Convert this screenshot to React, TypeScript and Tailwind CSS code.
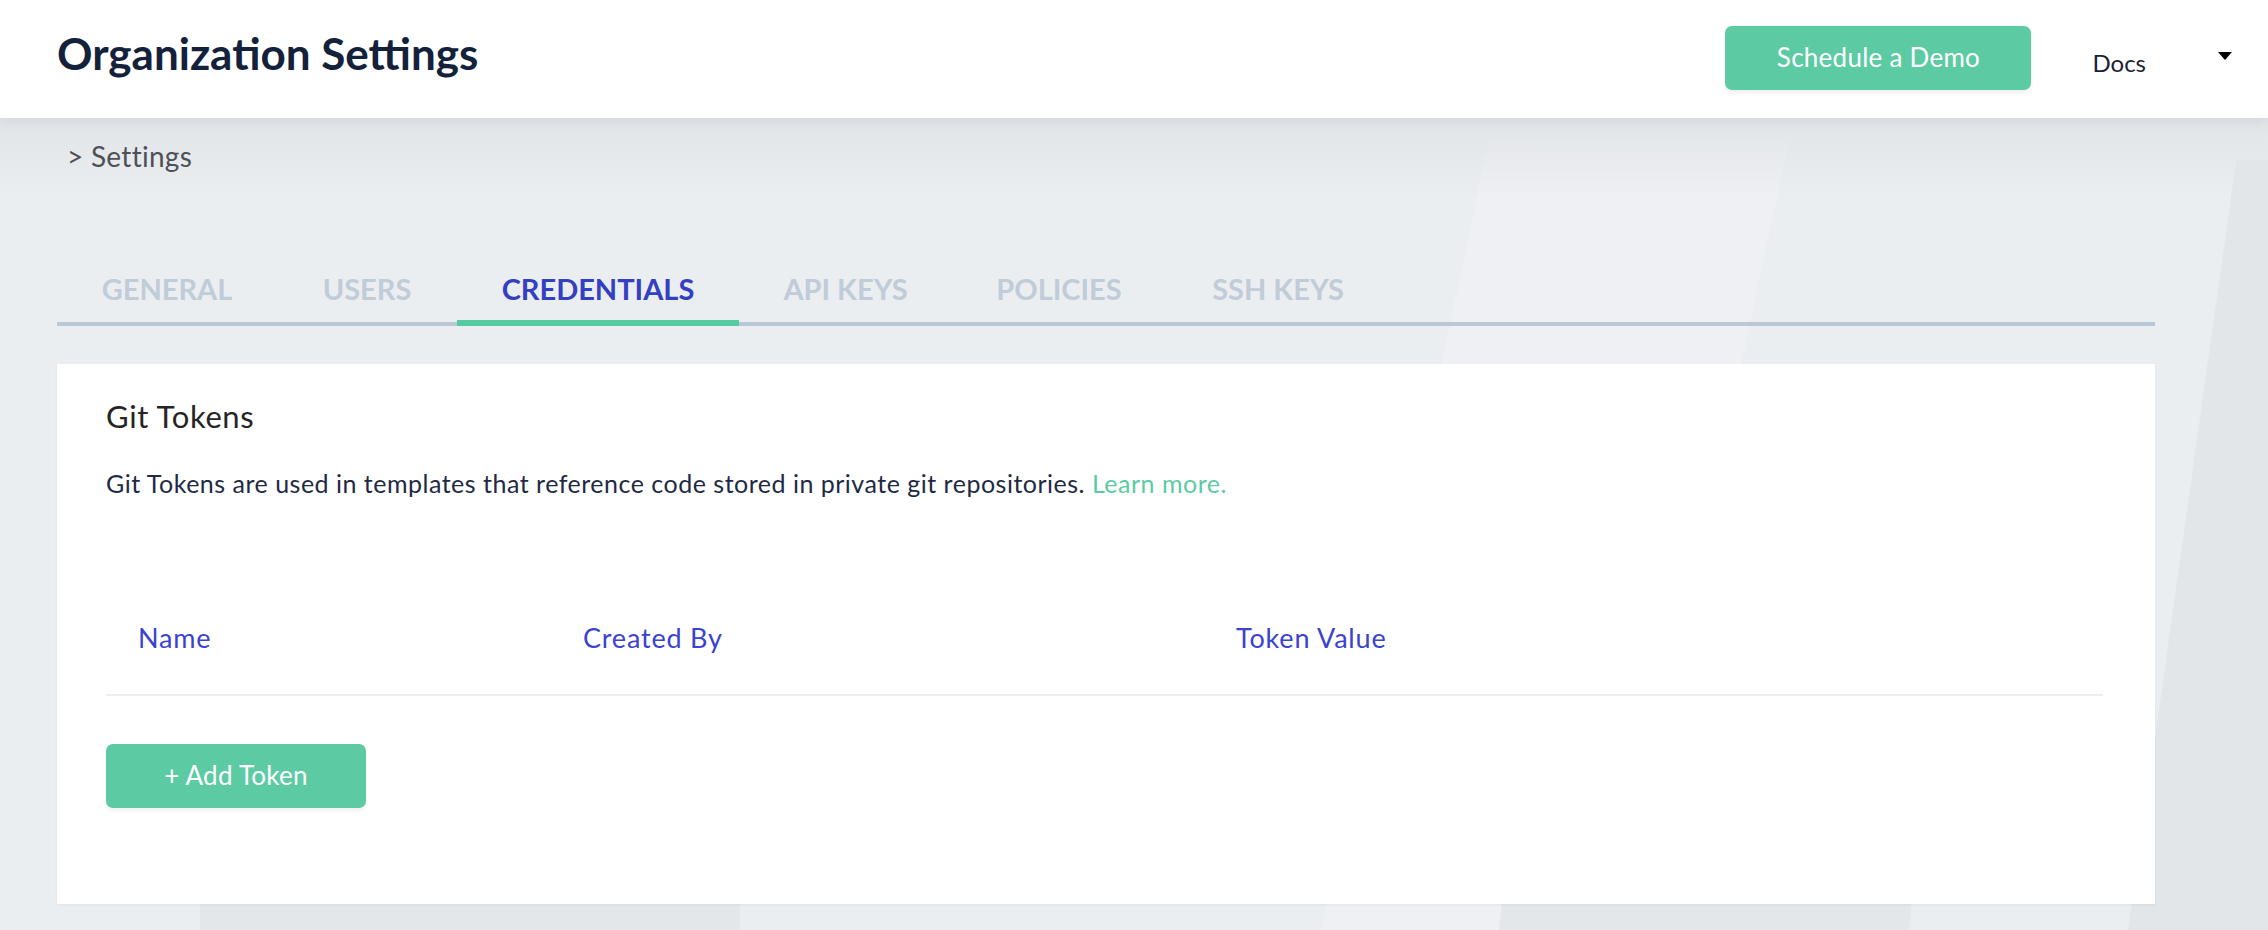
import React from 'react';

const tabs = [
  { label: 'GENERAL', width: 'w-[220px]' },
  { label: 'USERS', width: 'w-[180px]' },
  { label: 'CREDENTIALS', width: 'w-[282px]', active: true },
  { label: 'API KEYS', width: 'w-[213px]' },
  { label: 'POLICIES', width: 'w-[214px]' },
  { label: 'SSH KEYS', width: 'w-[224px]' },
];

function Header() {
  return (
    <header className="relative z-10 flex h-[118px] items-start bg-white pl-[57px] pr-[36px] shadow-[0_2px_14px_rgba(0,0,0,0.07)]">
      <h1 className="mt-[27px] text-[44px] font-bold leading-[1.2] text-[#14213a]">
        Organization Settings
      </h1>
      <button
        type="button"
        className="ml-auto mt-[26px] flex h-[64px] w-[306px] items-center justify-center rounded-[7px] bg-[#5ccba4] text-[26px] leading-[1.2] tracking-[0.01em] text-white shadow-[0_3px_4px_rgba(0,0,0,0.06)]"
      >
        Schedule a Demo
      </button>
      <span className="ml-[61px] mt-[49px] text-[24px] leading-[1.2] text-[#1b2333]">Docs</span>
      <svg className="ml-[72px] mt-[52px] h-[8px] w-[14px]" viewBox="0 0 14 8" aria-hidden="true">
        <path d="M0 0h14L7 8z" fill="#000" />
      </svg>
    </header>
  );
}

function Tabs() {
  return (
    <nav className="mt-[98px] flex items-end border-b-4 border-[#b9c8d4]">
      {tabs.map((tab) => (
        <div
          key={tab.label}
          className={`${tab.width} text-center text-[29px] font-bold leading-[1.2] ${
            tab.active
              ? '-mb-[4px] border-b-[6px] border-[#55cba1] pb-[14px] text-[#3340c2]'
              : 'pb-[16px] text-[#c0ccd8]'
          }`}
        >
          {tab.label}
        </div>
      ))}
    </nav>
  );
}

function GitTokensCard() {
  return (
    <section className="mt-[38px] bg-white pb-[96px] pl-[49px] pr-[52px] pt-[34px] shadow-[0_1px_3px_rgba(0,0,0,0.05)]">
      <h2 className="text-[31px] leading-[1.2] tracking-[0.02em] text-[#252525]">Git Tokens</h2>
      <p className="mt-[32px] text-[25px] leading-[1.2] tracking-[0.02em] text-[#1e2a44]">
        Git Tokens are used in templates that reference code stored in private git repositories.{' '}
        <a className="text-[#5ccba4]" href="#">
          Learn more.
        </a>
      </p>

      {/* Table header */}
      <div className="mt-[124px] flex border-b-2 border-[#eeeef0] pb-[40px] text-[27px] leading-[1.2] tracking-[0.03em] text-[#3a43cf]">
        <div className="w-[477px] pl-[32px]">Name</div>
        <div className="w-[653px]">Created By</div>
        <div className="flex-1">Token Value</div>
      </div>

      <button
        type="button"
        className="mt-[48px] flex h-[64px] w-[260px] items-center justify-center rounded-[7px] bg-[#5ccba4] text-[26px] leading-[1.2] tracking-[0.01em] text-white shadow-[0_3px_4px_rgba(0,0,0,0.06)]"
      >
        + Add Token
      </button>
    </section>
  );
}

export default function App() {
  return (
    <div className="relative min-h-screen overflow-hidden bg-[#ebeef1] font-['Lato','Noto_Sans',sans-serif]">
      {/* background decoration */}
      <div className="pointer-events-none absolute inset-0">
        <div className="absolute left-[1420px] top-0 h-full w-[300px] -skew-x-[12deg] bg-[#eff1f3] opacity-70" />
        <div className="absolute left-[2180px] top-[160px] h-[800px] w-[200px] -skew-x-[8deg] bg-[#e2e6e9]" />
        <div className="absolute left-[200px] top-[880px] h-[80px] w-[540px] bg-[#e3e7ea]" />
        <div className="absolute left-[1500px] top-[880px] h-[80px] w-[410px] -skew-x-[6deg] bg-[#e3e7ea]" />
        <div className="absolute left-0 top-[118px] h-[80px] w-full bg-gradient-to-b from-[#e2e5e8] to-transparent" />
      </div>

      <Header />

      <main className="relative pl-[57px] pr-[113px]">
        <div className="pl-[10px] pt-[22px] text-[28px] leading-[1.2] tracking-[0.01em] text-[#4d5157]">
          &gt; Settings
        </div>
        <Tabs />
        <GitTokensCard />
      </main>
    </div>
  );
}
